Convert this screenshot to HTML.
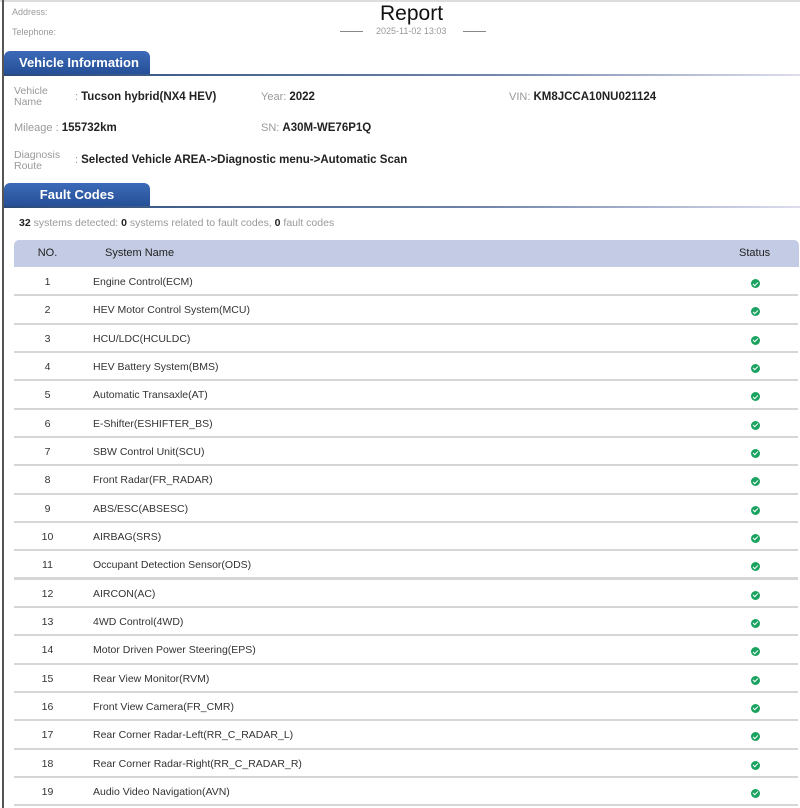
<!DOCTYPE html>
<html><head><meta charset="utf-8"><style>
*{margin:0;padding:0;box-sizing:border-box}
body{width:800px;height:808px;overflow:hidden;background:#fff;font-family:"Liberation Sans",sans-serif;position:relative;color:#222}
.abs{position:absolute;white-space:nowrap}
.lbl{color:#999;font-size:10px}
.tab{position:absolute;left:4px;width:146px;height:24px;background:linear-gradient(#3d6ab8,#244f96);border-radius:6px 6px 0 0;color:#fff;font-weight:bold;font-size:13px;line-height:24px}
.line{position:absolute;left:4px;right:0;height:2px;background:linear-gradient(90deg,#2a4a7a,#6f84a8 60%,#dde 100%)}
.g{color:#999;font-size:11px;font-weight:normal}
.v{font-weight:bold;font-size:11.5px;color:#222}
.row{position:absolute;left:14px;width:784px;height:28.33px;border-bottom:2px solid #d6d6d6;font-size:10.5px;color:#333}
.row .n{position:absolute;left:0;width:67px;text-align:center;top:8px}
.row .s{position:absolute;left:79px;top:8px}
.row .c{position:absolute;left:737px;top:11px;width:9px;height:9px;border-radius:50%;background:#1aa360}
.row .c:after{content:"";position:absolute;left:2.5px;top:1.5px;width:2px;height:4px;border:solid #fff;border-width:0 1.5px 1.5px 0;transform:rotate(45deg)}
</style></head><body>
<div class="abs" style="left:0;top:0;width:800px;height:2px;background:#ddd"></div>
<div class="abs" style="left:2px;top:0;width:2px;height:808px;background:#555"></div>
<div class="abs lbl" style="left:12px;top:7px;font-size:9px">Address:</div>
<div class="abs lbl" style="left:12px;top:27px;font-size:9px">Telephone:</div>
<div class="abs" style="left:380px;top:2px;font-size:21px;color:#111">Report</div>
<div class="abs" style="left:376px;top:26px;font-size:9px;color:#999">2025-11-02 13:03</div>
<div class="abs" style="left:340px;top:31px;width:23px;height:1px;background:#888"></div>
<div class="abs" style="left:463px;top:31px;width:23px;height:1px;background:#888"></div>

<div class="tab" style="top:51px;padding-left:15px">Vehicle Information</div>
<div class="line" style="top:74px"></div>
<div class="abs g" style="left:14px;top:86px;line-height:11px;font-size:10.5px">Vehicle<br>Name</div>
<div class="abs v" style="left:75px;top:91px"><span class="g">: </span>Tucson hybrid(NX4 HEV)</div>
<div class="abs v" style="left:261px;top:91px"><span class="g">Year: </span>2022</div>
<div class="abs v" style="left:509px;top:91px"><span class="g">VIN: </span>KM8JCCA10NU021124</div>
<div class="abs v" style="left:14px;top:122px"><span class="g">Mileage : </span>155732km</div>
<div class="abs v" style="left:261px;top:122px"><span class="g">SN: </span>A30M-WE76P1Q</div>
<div class="abs g" style="left:14px;top:150px;line-height:11px;font-size:10.5px">Diagnosis<br>Route</div>
<div class="abs v" style="left:75px;top:154px"><span class="g">: </span>Selected Vehicle AREA-&gt;Diagnostic menu-&gt;Automatic Scan</div>

<div class="tab" style="top:183px;text-align:center">Fault Codes</div>
<div class="line" style="top:206px"></div>
<div class="abs" style="left:19px;top:217px;font-size:10.5px;color:#999"><b style="color:#222">32</b> systems detected: <b style="color:#222">0</b> systems related to fault codes, <b style="color:#222">0</b> fault codes</div>

<div class="abs" style="left:14px;top:240px;width:785px;height:27px;background:#c3cce4;border-radius:5px 5px 0 0;font-size:11px;color:#222">
<span class="abs" style="left:0;width:67px;text-align:center;top:7px">NO.</span>
<span class="abs" style="left:91px;top:7px">System Name</span>
<span class="abs" style="left:725px;top:7px">Status</span></div>
<div id="t"></div>
<script>
var n=["Engine Control(ECM)","HEV Motor Control System(MCU)","HCU/LDC(HCULDC)","HEV Battery System(BMS)","Automatic Transaxle(AT)","E-Shifter(ESHIFTER_BS)","SBW Control Unit(SCU)","Front Radar(FR_RADAR)","ABS/ESC(ABSESC)","AIRBAG(SRS)","Occupant Detection Sensor(ODS)","AIRCON(AC)","4WD Control(4WD)","Motor Driven Power Steering(EPS)","Rear View Monitor(RVM)","Front View Camera(FR_CMR)","Rear Corner Radar-Left(RR_C_RADAR_L)","Rear Corner Radar-Right(RR_C_RADAR_R)","Audio Video Navigation(AVN)"];
var h="";for(var i=0;i<n.length;i++){h+='<div class="row" style="top:'+(268+i*28.33)+'px'+(i==10?';border-bottom-width:3px':'')+'"><span class="n">'+(i+1)+'</span><span class="s">'+n[i]+'</span><span class="c"></span></div>';}
document.getElementById("t").innerHTML=h;
</script>
</body></html>
